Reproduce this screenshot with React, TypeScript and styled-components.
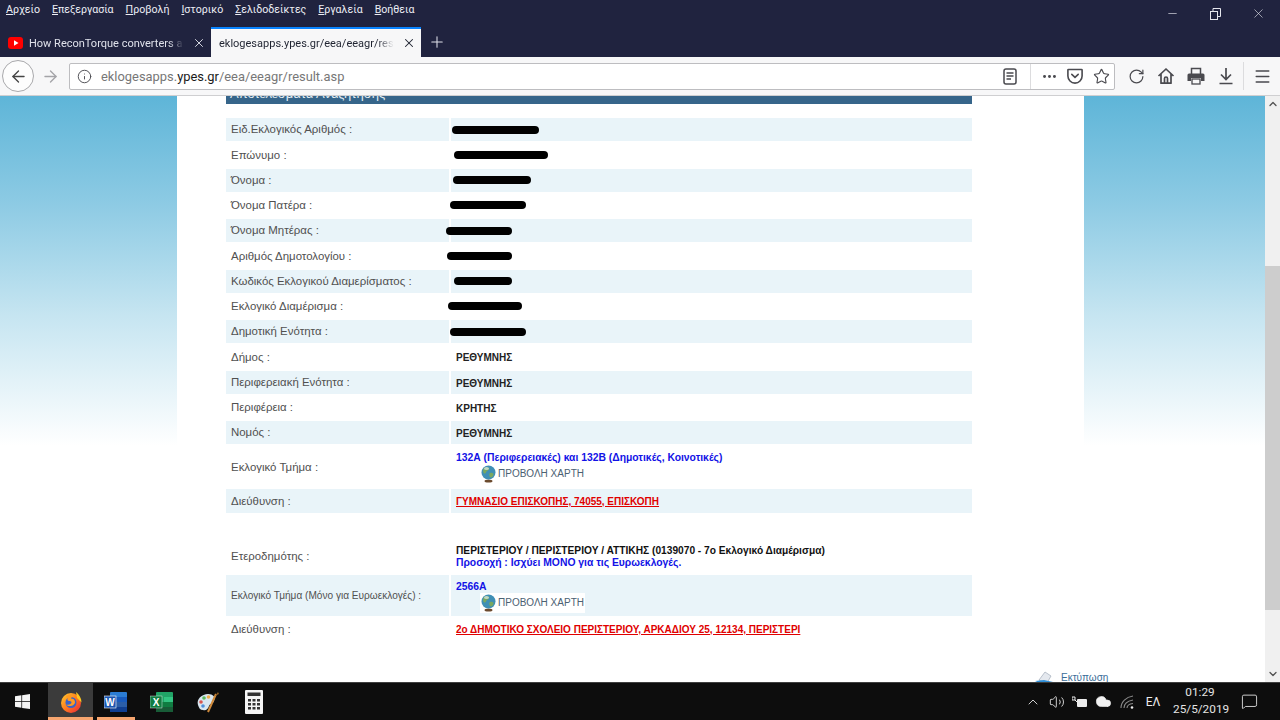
import React from "react";
import styled, { createGlobalStyle } from "styled-components";
import {
  ArrowLeft, ArrowRight, Info, Star, RotateCw, Menu, MoreHorizontal,
  X, Plus, Minus, ChevronUp, ChevronDown, Volume2, Cloud, MessageSquare,
} from "lucide-react";

const Global = createGlobalStyle`
  html, body { margin: 0; padding: 0; height: 100%; overflow: hidden; background: #fff; }
  #root { height: 100%; }
  * { box-sizing: border-box; }
`;

const Page = styled.div`
  width: 1280px; height: 720px; display: flex; flex-direction: column; overflow: hidden;
  font-family: "Liberation Sans", Arial, sans-serif;
`;
const Chrome = styled.header`
  background: #20233f; height: 57px; display: flex; flex-direction: column; flex: none;
  font-family: Roboto, "Noto Sans", sans-serif;
`;
const TitleRow = styled.div`
  height: 27px; display: flex; align-items: flex-start; justify-content: space-between; padding-left: 6px;
`;
const MenuList = styled.nav`
  display: flex; gap: 12px; padding-top: 2px; font-size: 10.6px; line-height: 16px; color: #eceef5;
`;
const WindowControls = styled.div`
  display: flex; color: #e6e7ee;
`;
const WinBtn = styled.span`
  width: 43px; height: 27px; display: flex; align-items: center; justify-content: center;
`;
const TabRow = styled.div`
  height: 30px; display: flex; align-items: stretch;
`;
const Tab = styled.div<{ $active?: boolean }>`
  width: ${p => (p.$active ? 210 : 211)}px; display: flex; align-items: center;
  padding-left: 8px; gap: 6px; font-size: 11px;
  color: ${p => (p.$active ? "#1f2330" : "#dfe1ea")};
  background: ${p => (p.$active ? "#f7f7f8" : "transparent")};
  border-top: ${p => (p.$active ? "2px solid #0a84ff" : "2px solid transparent")};
`;
const TabTitle = styled.span<{ $w: number }>`
  width: ${p => p.$w}px; flex: none; white-space: nowrap;
  -webkit-mask-image: linear-gradient(90deg, #000 90%, transparent);
  mask-image: linear-gradient(90deg, #000 90%, transparent);
`;
const TabClose = styled(X)`
  flex: none; margin-left: 2px;
`;
const NewTab = styled.span`
  width: 32px; display: flex; align-items: center; justify-content: center; color: #dfe1ea;
`;
const Toolbar = styled.div`
  height: 39px; background: #f7f7f8; border-bottom: 1px solid #cfcfd1; display: flex; align-items: center;
  padding-left: 2px; flex: none; color: #4a4a4f;
`;
const BackBtn = styled.span`
  width: 32px; height: 32px; border-radius: 50%; border: 1px solid #a9a9ac; background: #fdfdfd;
  display: flex; align-items: center; justify-content: center; color: #444;
`;
const ForwardBtn = styled.span`
  width: 32px; display: flex; justify-content: center; color: #a4a4a8;
`;
const UrlBar = styled.div`
  width: 1046px; height: 27px; margin-left: 3px; background: #fff; border: 1px solid #bdbdc0;
  border-radius: 2px; display: flex; align-items: center; padding-left: 7px;
`;
const UrlText = styled.div`
  flex: 1; margin-left: 9px; font-size: 12.9px; color: #777; font-family: Roboto, "Noto Sans", sans-serif; white-space: nowrap;
  b { font-weight: 400; color: #1a1a1a; }
`;
const UrlSlot = styled.span<{ $w?: number }>`
  width: ${p => p.$w ?? 26}px; display: flex; justify-content: center; align-items: center;
`;
const VRule = styled.span<{ $ml: number; $mr: number; $h: number }>`
  width: 1px; height: ${p => p.$h}px; background: #dcdcde; margin-left: ${p => p.$ml}px; margin-right: ${p => p.$mr}px;
`;
const ToolSlot = styled.span`
  width: 30px; display: flex; justify-content: center; align-items: center;
`;
const ToolsGroup = styled.div`
  display: flex; align-items: center; margin-left: 6px;
`;
const Viewport = styled.main`
  flex: 1; min-height: 0; display: flex; overflow: hidden;
  background: linear-gradient(#5eb5d8 0, #8ecbe4 110px, #c6e5f1 220px, #fff 350px);
`;
const SideLeft = styled.div`
  width: 177px; flex: none;
`;
const SideRight = styled.div`
  flex: 1;
`;
const Content = styled.div`
  width: 907px; flex: none; background: #fff; padding-left: 49px; display: flex; flex-direction: column;
`;
const Heading = styled.div`
  width: 746px; height: 8px; background: #36658a; color: #e4edf3; font-size: 13px; line-height: 0; padding-left: 4px;
  overflow: hidden; flex: none; margin-bottom: 14px;
`;
const HeadingText = styled.div`
  margin-top: -2px; white-space: nowrap;
`;
const Rows = styled.div`
  display: flex; flex-direction: column; gap: 2px; width: 746px; flex: none;
`;
const Row = styled.div<{ $h?: number }>`
  display: grid; grid-template-columns: 223px 521px; column-gap: 2px; height: ${p => p.$h ?? 23.25}px;
`;
const Label = styled.div<{ $shade?: boolean; $small?: boolean }>`
  background: ${p => (p.$shade ? "#e9f4f9" : "transparent")};
  display: flex; align-items: center; padding: 0 0 0.5px 5px; color: #505050;
  font-size: ${p => (p.$small ? 10.1 : 11.45)}px;
`;
const Value = styled.div<{ $shade?: boolean }>`
  background: ${p => (p.$shade ? "#e9f4f9" : "transparent")};
  display: flex; flex-direction: column; justify-content: center; padding: 2px 0 0 5px; font-size: 10px; font-weight: 700; color: #222;
`;
const Redaction = styled.span<{ $x: number; $w: number }>`
  display: block; height: 8px; border-radius: 4px; background: #000; width: ${p => p.$w}px;
  margin: -2px 0 0 ${p => p.$x - 456}px;
`;
const Blue = styled.span`
  color: #1212e6; line-height: 12px; font-size: 10.35px;
`;
const Black = styled.span`
  color: #111; line-height: 12px; font-size: 10.2px;
`;
const AddressLink = styled.span`
  color: #e00000; text-decoration: underline; text-decoration-color: #e00000; margin-top: -2px;
`;
const MapLink = styled.span<{ $plate?: boolean }>`
  display: flex; align-items: center; gap: 2px; margin-left: 24px; width: 105px; height: 20px; padding-left: 1px;
  font-size: 10px; font-weight: 400; color: #4b6172; background: ${p => (p.$plate ? "#fff" : "transparent")};
`;
const Spacer = styled.div`
  height: 22px;
`;
const PrintLink = styled.div`
  display: flex; align-items: flex-start; gap: 8px; margin: 31px 0 0 809px; width: max-content; color: #3a6d98; font-size: 10px; line-height: 14px; white-space: nowrap;
  svg { flex: none; }
`;
const ScrollBar = styled.div`
  width: 15px; flex: none; margin-left: auto; background: #f0f0f0; display: flex; flex-direction: column; align-items: center; color: #505050;
`;
const ScrollArrow = styled.span`
  height: 16px; display: flex; align-items: center; justify-content: center; flex: none;
`;
const ScrollTrack = styled.div`
  flex: 1; width: 100%; padding-top: 154px; padding-bottom: 56px; display: flex;
`;
const ScrollThumb = styled.div`
  flex: 1; background: #cdcdcd;
`;
const Taskbar = styled.footer`
  height: 38px; flex: none; background: #0d0d0d; border-top: 1px solid #3f3f3f; display: flex; color: #ececec;
`;
const StartBtn = styled.span`
  width: 48px; display: flex; align-items: center; justify-content: center; padding-right: 3px;
`;
const AppBtn = styled.span<{ $active?: boolean; $open?: boolean }>`
  width: ${p => (p.$active ? 45 : 46)}px; display: flex; align-items: center; justify-content: center; position: relative;
  background: ${p => (p.$active ? "#3b3b3b" : "transparent")};
  &::after {
    content: ""; position: absolute; bottom: 0; left: ${p => (p.$active ? 0 : 4)}px; right: ${p => (p.$active ? 0 : 4)}px; height: 3px;
    background: ${p => (p.$open ? "#f6a56f" : "transparent")};
  }
`;
const Tray = styled.div`
  margin-left: auto; display: flex; align-items: center; height: 100%;
`;
const TraySlot = styled.span<{ $w?: number }>`
  width: ${p => p.$w ?? 23.5}px; display: flex; align-items: center; justify-content: center; font-size: 12px;
  font-family: Roboto, "Noto Sans", sans-serif;
`;
const Clock = styled.div`
  width: 54px; margin: 0 0 2px 6px; font-size: 11.8px; line-height: 17px; text-align: center; white-space: nowrap;
  font-family: Roboto, "Noto Sans", sans-serif; color: #e4e4e4;
`;

const Reader = () => (
  <svg width="14" height="17" viewBox="0 0 14 17" fill="none" stroke="#4a4a4f" strokeWidth="1.5">
    <rect x="1" y="1" width="12" height="15" rx="2" />
    <path d="M3.5 5h7M3.5 8h7M3.5 11h4.5" />
  </svg>
);
const Pocket = () => (
  <svg width="16" height="16" viewBox="0 0 16 16" fill="none" stroke="#4a4a4f" strokeWidth="1.6">
    <path d="M1.5 1.5h13a.6.6 0 0 1 .6.6V8a7 7 0 0 1-14.2 0V2.1a.6.6 0 0 1 .6-.6z" />
    <path d="M4.8 6.3 8 9.3l3.2-3" strokeLinecap="round" />
  </svg>
);
const HomeIcon = () => (
  <svg width="18" height="18" viewBox="0 0 18 18" fill="none" stroke="#4a4a4f" strokeWidth="1.7">
    <path d="M1.5 9 9 2l7.5 7M4 7v9.2h10V7" strokeLinejoin="round" />
    <path d="M7.5 16v-4.5a1.5 1.5 0 0 1 3 0V16" />
  </svg>
);
const PrinterIcon = () => (
  <svg width="18" height="18" viewBox="0 0 18 18">
    <path d="M4.500 7V1.500h9V7" fill="none" stroke="#4a4a4f" strokeWidth="1.500" />
    <path d="M2 6.500h14a1.500 1.500 0 0 1 1.500 1.500v6H14v-3H4v3H.5V8A1.500 1.500 0 0 1 2 6.500z" fill="#4a4a4f" />
    <rect x="5" y="12" width="8" height="5" fill="none" stroke="#4a4a4f" strokeWidth="1.300" />
  </svg>
);
const DownloadIcon = () => (
  <svg width="16" height="18" viewBox="0 0 16 18" fill="none" stroke="#4a4a4f" strokeWidth="1.7">
    <path d="M8 1v11M3 7.5 8 12.5l5-5M1.5 16.5h13" />
  </svg>
);
const RestoreIcon = () => (
  <svg width="11" height="12" viewBox="0 0 11 12" fill="none" stroke="#e6e7ee" strokeWidth="1">
    <rect x="0.5" y="3.5" width="7" height="8" />
    <path d="M3 3.5V.5h7.5v8H7.5" />
  </svg>
);
const YouTube = () => (
  <svg width="15" height="12" viewBox="0 0 15 12">
    <rect width="15" height="12" rx="3" fill="#f00" />
    <path d="M6 3.2v5.6L10.5 6z" fill="#fff" />
  </svg>
);
const Globe = () => (
  <svg width="15" height="18" viewBox="0 0 15 18">
    <ellipse cx="7.5" cy="16" rx="4" ry="1.6" fill="#6b4a2e" />
    <circle cx="7.5" cy="7.5" r="7" fill="#3f8fb5" />
    <path d="M3 3c2-1.6 4-1 5 0s-1 2.5-2 3-1 3-2.500 2.500S1.500 4.500 3 3zM9 8c2-.6 4 0 3.500 2S10 13 9 12s-1-3.500 0-4z" fill="#7aa860" />
    <ellipse cx="5.500" cy="3.500" rx="2.500" ry="1.500" fill="#dcecf2" opacity=".7" />
  </svg>
);
const PrintGlyph = () => (
  <svg width="18" height="14" viewBox="0 0 18 14">
    <path d="M4 9 10 1l6 4-4 7z" fill="#e4e8ee" stroke="#aab4c0" strokeWidth=".8" />
    <path d="M0 10l9 4h9v-3l-9-2z" fill="#2f8fd8" />
  </svg>
);
const Windows = () => (
  <svg width="15" height="15" viewBox="0 0 16 16" fill="#f4f4f4">
    <path d="M0 2.300 6.800 1.300V7.500H0zM7.600 1.200 16 0V7.500H7.600zM0 8.300H6.800V14.600L0 13.700zM7.600 8.300H16V16L7.600 14.800z" />
  </svg>
);
const Firefox = () => (
  <svg width="22" height="22" viewBox="0 0 22 22">
    <defs>
      <linearGradient id="ff" x1="0" y1="0" x2="1" y2="1">
        <stop offset="0" stopColor="#ffd02e" />
        <stop offset=".5" stopColor="#ff7a1f" />
        <stop offset="1" stopColor="#e8213c" />
      </linearGradient>
    </defs>
    <circle cx="11" cy="12" r="10" fill="url(#ff)" />
    <path d="M16 1c3 2.500 5.500 6 5.500 10.500L17 7z" fill="#ffc61e" />
    <circle cx="11" cy="11.500" r="5.500" fill="#3a63c8" />
    <path d="M6 5c3-2 7-1.500 8 .5-2 0-3 1-3 2 2 0 4 1 4 3.500 0 2.500-2.500 4-5 4-1.500 0-3-.5-4-1.500 3 1 5.500-.5 5.500-2 0-1-1-1.500-2.500-1.500-1 0-2-1-1.500-2.500C8 7 6.500 7 6 5z" fill="#ff9a22" />
  </svg>
);
const IconLetter = styled.text`
  font-family: "Liberation Sans", sans-serif; font-weight: 700; font-size: 10px; fill: #fff;
`;
const Word = () => (
  <svg width="24" height="20" viewBox="0 0 24 20">
    <rect x="6" y="0" width="17" height="20" rx="1" fill="#2b7cd3" />
    <rect x="6" y="5" width="17" height="5" fill="#185abd" />
    <rect x="6" y="10" width="17" height="5" fill="#2b5ea8" />
    <rect x="6" y="15" width="17" height="5" fill="#103f91" />
    <rect x="0" y="4" width="12" height="12" fill="#1a55b0" stroke="#fff" strokeWidth=".6" />
    <IconLetter x="1.300" y="13.500">W</IconLetter>
  </svg>
);
const Excel = () => (
  <svg width="24" height="20" viewBox="0 0 24 20">
    <rect x="6" y="0" width="17" height="20" rx="1" fill="#21a366" />
    <rect x="14" y="5" width="9" height="5" fill="#33c481" />
    <rect x="6" y="10" width="8" height="5" fill="#107c41" />
    <rect x="14" y="10" width="9" height="5" fill="#107c41" />
    <rect x="6" y="15" width="17" height="5" fill="#185c37" />
    <rect x="0" y="4" width="12" height="12" fill="#107c41" stroke="#fff" strokeWidth=".4" />
    <IconLetter x="2.700" y="13.500">X</IconLetter>
  </svg>
);
const Paint = () => (
  <svg width="24" height="22" viewBox="0 0 24 22">
    <path d="M2 14C0 8 6 3 12 3c5 0 8 3 6 7-1 3-4 2-5 5-1 3-3 5-6 4-3 0-4-2-5-5z" fill="#d8e6f0" />
    <circle cx="5" cy="11" r="1.800" fill="#d9534f" />
    <circle cx="8" cy="7" r="1.800" fill="#5cb85c" />
    <circle cx="12.500" cy="6" r="1.800" fill="#f0ad4e" />
    <circle cx="7" cy="15" r="1.800" fill="#4f8fd9" />
    <path d="M12 21 20 3" stroke="#d08a3a" strokeWidth="2" />
    <path d="M19 5l3-4 1 2z" fill="#8c5a22" />
  </svg>
);
const Calc = () => (
  <svg width="18" height="24" viewBox="0 0 18 24">
    <rect width="18" height="24" rx="1" fill="#f5f5f5" />
    <rect x="2.500" y="2.500" width="13" height="3.500" fill="#333" />
    {[9, 13, 17].map(y => [3, 7.500, 12].map(x => <rect key={`${x}-${y}`} x={x} y={y} width="3" height="2.500" fill="#333" />))}
  </svg>
);
const Plug = () => (
  <svg width="16" height="12" viewBox="0 0 16 12" fill="#ececec">
    <rect x="5" y="3" width="10" height="8" rx="1" />
    <path d="M0 1h3v3H0zM3 4l2 2" stroke="#ececec" fill="none" />
  </svg>
);
const Wifi = () => (
  <svg width="14" height="14" viewBox="0 0 14 14" fill="none" stroke="#8a8a8a" strokeWidth="1.100">
    <path d="M1 13C1 7 6 2 13 1M4 13c0-4 3.500-7 9-8M7 13c0-2 2-4 6-4.500" />
    <circle cx="12" cy="12.500" r="1.300" fill="#eee" stroke="none" />
  </svg>
);

type RowData = { label: string; small?: boolean; h?: number; value: React.ReactNode };
const bar = (x: number, w: number) => <Redaction $x={x} $w={w} />;
const b = (t: string) => <span>{t}</span>;

const rows: RowData[] = [
  { label: "Ειδ.Εκλογικός Αριθμός :", value: bar(452, 87) },
  { label: "Επώνυμο :", value: bar(454, 94) },
  { label: "Όνομα :", value: bar(453, 78) },
  { label: "Όνομα Πατέρα :", value: bar(450, 76) },
  { label: "Όνομα Μητέρας :", value: bar(446, 66) },
  { label: "Αριθμός Δημοτολογίου :", value: bar(447, 65) },
  { label: "Κωδικός Εκλογικού Διαμερίσματος :", value: bar(454, 58) },
  { label: "Εκλογικό Διαμέρισμα :", value: bar(448, 74) },
  { label: "Δημοτική Ενότητα :", value: bar(450, 76) },
  { label: "Δήμος :", value: b("ΡΕΘΥΜΝΗΣ") },
  { label: "Περιφερειακή Ενότητα :", value: b("ΡΕΘΥΜΝΗΣ") },
  { label: "Περιφέρεια :", value: b("ΚΡΗΤΗΣ") },
  { label: "Νομός :", value: b("ΡΕΘΥΜΝΗΣ") },
  {
    label: "Εκλογικό Τμήμα :", h: 41,
    value: (
      <>
        <Blue>132Α (Περιφερειακές) και 132Β (Δημοτικές, Κοινοτικές)</Blue>
        <MapLink><Globe />ΠΡΟΒΟΛΗ ΧΑΡΤΗ</MapLink>
      </>
    ),
  },
  { label: "Διεύθυνση :", h: 24, value: <AddressLink>ΓΥΜΝΑΣΙΟ ΕΠΙΣΚΟΠΗΣ, 74055, ΕΠΙΣΚΟΠΗ</AddressLink> },
];
const rows2: RowData[] = [
  {
    label: "Ετεροδημότης :", h: 34,
    value: (
      <>
        <Black>ΠΕΡΙΣΤΕΡΙΟΥ / ΠΕΡΙΣΤΕΡΙΟΥ / ΑΤΤΙΚΗΣ (0139070 - 7ο Εκλογικό Διαμέρισμα)</Black>
        <Blue>Προσοχή : Ισχύει ΜΟΝΟ για τις Ευρωεκλογές.</Blue>
      </>
    ),
  },
  {
    label: "Εκλογικό Τμήμα (Μόνο για Ευρωεκλογές) :", small: true, h: 41,
    value: (
      <>
        <Blue>2566Α</Blue>
        <MapLink $plate><Globe />ΠΡΟΒΟΛΗ ΧΑΡΤΗ</MapLink>
      </>
    ),
  },
  { label: "Διεύθυνση :", h: 22, value: <AddressLink>2ο ΔΗΜΟΤΙΚΟ ΣΧΟΛΕΙΟ ΠΕΡΙΣΤΕΡΙΟΥ, ΑΡΚΑΔΙΟΥ 25, 12134, ΠΕΡΙΣΤΕΡΙ</AddressLink> },
];

const renderRows = (list: RowData[], startShaded: boolean) =>
  list.map((r, i) => {
    const shade = (i % 2 === 0) === startShaded;
    return (
      <Row key={`${r.label}-${i}`} $h={r.h}>
        <Label $shade={shade} $small={r.small}>{r.label}</Label>
        <Value $shade={shade}>{r.value}</Value>
      </Row>
    );
  });

const menu: [string, string][] = [
  ["Α", "ρχείο"], ["Ε", "πεξεργασία"], ["Π", "ροβολή"], ["Ι", "στορικό"],
  ["Σ", "ελιδοδείκτες"], ["Ε", "ργαλεία"], ["Β", "οήθεια"],
];

export default function App() {
  return (
    <Page>
      <Global />
      <Chrome>
        <TitleRow>
          <MenuList>
            {menu.map(([k, rest]) => <span key={k + rest}><u>{k}</u>{rest}</span>)}
          </MenuList>
          <WindowControls>
            <WinBtn><Minus size={13} strokeWidth={1.2} /></WinBtn>
            <WinBtn><RestoreIcon /></WinBtn>
            <WinBtn><X size={15} strokeWidth={1} /></WinBtn>
          </WindowControls>
        </TitleRow>
        <TabRow>
          <Tab>
            <YouTube />
            <TabTitle $w={155}>How ReconTorque converters a</TabTitle>
            <TabClose size={14} strokeWidth={1.6} />
          </Tab>
          <Tab $active>
            <TabTitle $w={175}>eklogesapps.ypes.gr/eea/eeagr/resu</TabTitle>
            <TabClose size={14} strokeWidth={1.8} />
          </Tab>
          <NewTab><Plus size={18} strokeWidth={1.4} /></NewTab>
        </TabRow>
      </Chrome>
      <Toolbar>
        <BackBtn><ArrowLeft size={19} strokeWidth={1.7} /></BackBtn>
        <ForwardBtn><ArrowRight size={19} strokeWidth={1.7} /></ForwardBtn>
        <UrlBar>
          <Info size={15} strokeWidth={1.5} />
          <UrlText>eklogesapps.<b>ypes.gr</b>/eea/eeagr/result.asp</UrlText>
          <UrlSlot $w={22}><Reader /></UrlSlot>
          <VRule $ml={9} $mr={5} $h={25} />
          <UrlSlot><MoreHorizontal size={17} strokeWidth={2.2} /></UrlSlot>
          <UrlSlot><Pocket /></UrlSlot>
          <UrlSlot><Star size={17} strokeWidth={1.6} /></UrlSlot>
        </UrlBar>
        <ToolsGroup>
          <ToolSlot><RotateCw size={17} strokeWidth={1.7} /></ToolSlot>
          <ToolSlot><HomeIcon /></ToolSlot>
          <ToolSlot><PrinterIcon /></ToolSlot>
          <ToolSlot><DownloadIcon /></ToolSlot>
          <VRule $ml={2} $mr={3} $h={28} />
          <ToolSlot><Menu size={19} strokeWidth={1.7} /></ToolSlot>
        </ToolsGroup>
      </Toolbar>
      <Viewport>
        <SideLeft />
        <Content>
          <Heading><HeadingText>Αποτελέσματα Αναζήτησης</HeadingText></Heading>
          <Rows>
            {renderRows(rows, true)}
            <Spacer />
            {renderRows(rows2, false)}
          </Rows>
          <PrintLink><PrintGlyph />Εκτύπωση</PrintLink>
        </Content>
        <SideRight />
        <ScrollBar>
          <ScrollArrow><ChevronUp size={12} strokeWidth={2.5} /></ScrollArrow>
          <ScrollTrack><ScrollThumb /></ScrollTrack>
          <ScrollArrow><ChevronDown size={12} strokeWidth={2.5} /></ScrollArrow>
        </ScrollBar>
      </Viewport>
      <Taskbar>
        <StartBtn><Windows /></StartBtn>
        <AppBtn $active $open><Firefox /></AppBtn>
        <AppBtn $open><Word /></AppBtn>
        <AppBtn><Excel /></AppBtn>
        <AppBtn><Paint /></AppBtn>
        <AppBtn><Calc /></AppBtn>
        <Tray>
          <TraySlot><ChevronUp size={16} strokeWidth={1.3} /></TraySlot>
          <TraySlot><Volume2 size={16} strokeWidth={1.3} /></TraySlot>
          <TraySlot><Plug /></TraySlot>
          <TraySlot><Cloud size={17} fill="#f2f2f2" strokeWidth={1} /></TraySlot>
          <TraySlot><Wifi /></TraySlot>
          <TraySlot $w={28}>ΕΛ</TraySlot>
          <Clock>01:29<br />25/5/2019</Clock>
          <TraySlot $w={44}><MessageSquare size={17} strokeWidth={1.2} /></TraySlot>
          <TraySlot $w={9} />
        </Tray>
      </Taskbar>
    </Page>
  );
}
